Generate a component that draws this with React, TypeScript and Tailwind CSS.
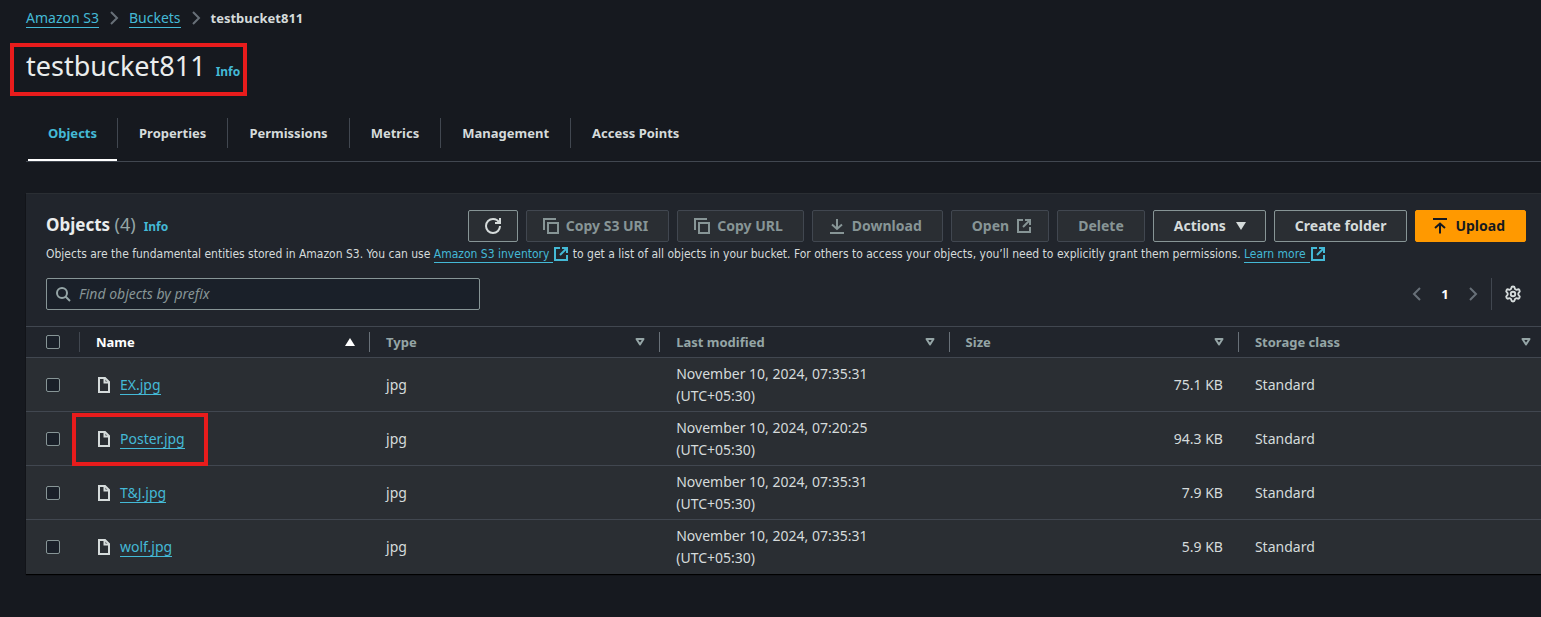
import React, { type ReactNode } from "react";
import { Settings } from "lucide-react";

type IconProps = { children: ReactNode; className?: string };

function Icon({ children, className = "" }: IconProps) {
  return (
    <svg
      viewBox="0 0 16 16"
      className={`size-4 shrink-0 fill-none stroke-current stroke-2 ${className}`}
      aria-hidden="true"
    >
      {children}
    </svg>
  );
}

const ChevronRight = () => (
  <Icon className="text-[#687078]">
    <path d="M5 2l6 6-6 6" />
  </Icon>
);
const ChevronLeft = () => (
  <Icon className="text-[#687078]">
    <path d="M11 2L5 8l6 6" />
  </Icon>
);
const CopyIcon = () => (
  <Icon>
    <path d="M15 5H5v10h10z" />
    <path d="M13 1H1v11" />
  </Icon>
);
const DownloadIcon = () => (
  <Icon>
    <path d="M1 15h14M8 1v10M3 6.5l5 4.5 5-4.5" />
  </Icon>
);
const UploadIcon = () => (
  <Icon>
    <path d="M1 1h14M8 15.5V5.5M3 10l5-4.5 5 4.5" />
  </Icon>
);
const ExternalIcon = () => (
  <Icon>
    <path d="M10 2h4v4" strokeLinecap="square" />
    <path d="M7 9l7-7" />
    <path d="M14 10v4H2V2h4" strokeLinecap="square" />
  </Icon>
);
const RefreshIcon = () => (
  <Icon>
    <path d="M10 5h5V0" />
    <path d="M15 8a7 7 0 1 1-7-7 6.9 6.9 0 0 1 6.3 4" />
  </Icon>
);
const SearchIcon = () => (
  <Icon>
    <circle cx="7" cy="7" r="5" />
    <path d="M15 15l-4.5-4.5" />
  </Icon>
);
const FileIcon = () => (
  <Icon>
    <path d="M9 1H3v14h10V5z" />
    <path d="M8.5 1v4.5H13" />
  </Icon>
);
const CaretDown = () => (
  <Icon>
    <path d="M3 4h10l-5 8z" className="fill-current stroke-none" />
  </Icon>
);
const CaretUp = () => (
  <Icon>
    <path d="M3 12h10L8 4z" className="fill-current stroke-none" />
  </Icon>
);
const SortIcon = () => (
  <Icon>
    <path d="M4.5 5h7L8 10.5z" strokeLinejoin="round" />
  </Icon>
);

function TextLink({ children }: { children: ReactNode }) {
  return (
    <a href="#" className="inline-block border-b border-[#44b9d6] leading-[18px] text-[#44b9d6]">
      {children}
    </a>
  );
}

function NoteLink({ children }: { children: ReactNode }) {
  return (
    <a href="#" className="inline-flex h-4 items-start align-top text-[#44b9d6]">
      <span className="border-b border-[#44b9d6] pr-1 leading-4">{children}</span>
      <ExternalIcon />
    </a>
  );
}

function InfoLink() {
  return (
    <a href="#" className="text-xs font-bold text-[#44b9d6]">
      Info
    </a>
  );
}

type ButtonProps = {
  children: ReactNode;
  label?: string;
  icon?: "start" | "end" | "only";
  disabled?: boolean;
  primary?: boolean;
};

function Button({ children, label, icon, disabled, primary }: ButtonProps) {
  const tone = primary
    ? "border-[#ff9900] bg-[#ff9900] text-[#16191f]"
    : disabled
      ? "border-[#414750] bg-[#2a2e33] text-[#879596]"
      : "border-[#879596] bg-[#2a2e33] text-[#d5dbdb]";
  const padding =
    icon === "only" ? "px-4" : icon === "start" ? "pl-4 pr-5" : icon === "end" ? "pl-5 pr-4" : "px-5";
  return (
    <button
      type="button"
      aria-label={label}
      disabled={disabled}
      className={`flex h-8 items-center gap-[7px] rounded-[2px] border text-sm font-bold whitespace-nowrap ${padding} ${tone}`}
    >
      {children}
    </button>
  );
}

function Checkbox({ label }: { label: string }) {
  return (
    <input
      type="checkbox"
      aria-label={label}
      className="block size-3.5 appearance-none rounded-[2px] border border-[#879596] bg-[#1a2029] checked:bg-[#44b9d6]"
    />
  );
}

const tabs = ["Objects", "Properties", "Permissions", "Metrics", "Management", "Access Points"];

const columns = [
  { name: "Name", sorted: true, width: "w-[19.15%]" },
  { name: "Type", sorted: false, width: "w-[19.15%]" },
  { name: "Last modified", sorted: false, width: "w-[19.1%]" },
  { name: "Size", sorted: false, width: "w-[19.1%]" },
  { name: "Storage class", sorted: false, width: "" },
];

const files = [
  { name: "EX.jpg", type: "jpg", modified: "November 10, 2024, 07:35:31", size: "75.1 KB", marked: false },
  { name: "Poster.jpg", type: "jpg", modified: "November 10, 2024, 07:20:25", size: "94.3 KB", marked: true },
  { name: "T&J.jpg", type: "jpg", modified: "November 10, 2024, 07:35:31", size: "7.9 KB", marked: false },
  { name: "wolf.jpg", type: "jpg", modified: "November 10, 2024, 07:35:31", size: "5.9 KB", marked: false },
];

function ObjectsTable() {
  return (
    <table className="w-full table-fixed border-separate border-spacing-0 text-left">
      <thead className="text-[13px]">
        <tr>
          <th className="w-[54px] border-y border-[#414750] p-0">
            <div className="flex h-[30px] items-center justify-between pl-5">
              <Checkbox label="Select all objects" />
              <span className="h-5 w-px bg-[#414750]" />
            </div>
          </th>
          {columns.map((c, i) => (
            <th
              key={c.name}
              className={`border-y border-[#414750] p-0 font-bold ${c.width} ${c.sorted ? "text-white" : "text-[#95a5a6]"}`}
            >
              <div className="flex h-[30px] items-center pl-4">
                <span className="grow">{c.name}</span>
                {c.sorted ? <CaretUp /> : <SortIcon />}
                {i < columns.length - 1 ? (
                  <span className="ml-[11px] h-5 w-px bg-[#687078]" />
                ) : (
                  <span className="w-[7px]" />
                )}
              </div>
            </th>
          ))}
        </tr>
      </thead>
      <tbody className="bg-[#2a2e33] text-sm leading-[22px] [&>tr:last-child>td]:border-transparent [&>tr>td]:border-b [&>tr>td]:border-[#414750]">
        {files.map((f) => (
          <tr key={f.name}>
            <td className="pl-5">
              <Checkbox label={`Select ${f.name}`} />
            </td>
            <td className="relative px-4">
              <div className="flex items-center gap-2">
                <FileIcon />
                <span className="flex pt-0.5">
                  <TextLink>{f.name}</TextLink>
                </span>
              </div>
              {f.marked && (
                <span className="pointer-events-none absolute top-px -left-2 h-[53px] w-[136px] border-4 border-[#e81c1c]" />
              )}
            </td>
            <td className="px-4">{f.type}</td>
            <td className="px-4 pt-[5px] pb-1">
              {f.modified}
              <br />
              (UTC+05:30)
            </td>
            <td className="px-4 text-right">{f.size}</td>
            <td className="px-4">Standard</td>
          </tr>
        ))}
      </tbody>
    </table>
  );
}

export default function App() {
  return (
    <main className="min-h-screen bg-[#16191f] pt-[7px] pb-10 pl-[26px] font-['Noto_Sans',sans-serif] text-sm text-[#d5dbdb]">
      <nav aria-label="Breadcrumb" className="flex h-[22px] items-center gap-[7px]">
        <TextLink>Amazon S3</TextLink>
        <ChevronRight />
        <TextLink>Buckets</TextLink>
        <ChevronRight />
        <span className="text-[13px] font-bold">testbucket811</span>
      </nav>

      <div className="mt-3.5 -ml-4 flex h-[53px] w-fit items-baseline gap-2.5 border-4 border-[#e81c1c] pr-[3px] pl-3">
        <h1 className="text-[27px] leading-[38px] text-[#eaeded]">testbucket811</h1>
        <InfoLink />
      </div>

      <div role="tablist" className="mt-[22px] flex border-b border-[#414750] pl-0.5">
        {tabs.map((t, i) => (
          <div key={t} className="flex">
            <button
              type="button"
              role="tab"
              aria-selected={i === 0}
              className={`h-[43px] border-b-2 pb-[11px] text-[13px] font-bold ${
                i === 0 ? "border-white px-5 text-[#44b9d6]" : "border-transparent px-[21px]"
              }`}
            >
              {t}
            </button>
            {i < tabs.length - 1 && <span className="h-[30px] w-px bg-[#414750]" />}
          </div>
        ))}
      </div>

      <section className="mt-[31px] border-t border-[#2a2e33] bg-[#21252c] shadow-[0_1px_1px_#000]">
        <div className="pt-4 pr-[15px] pb-4 pl-5">
          <div className="flex items-start justify-between gap-4">
            <div className="flex items-baseline gap-2">
              <h2 className="text-[17px] leading-7 font-bold text-[#eaeded]">
                Objects <span className="text-lg leading-7 font-normal text-[#95a5a6]">(4)</span>
              </h2>
              <InfoLink />
            </div>
            <div className="flex gap-2">
              <Button label="Refresh" icon="only">
                <RefreshIcon />
              </Button>
              <Button icon="start" disabled>
                <CopyIcon />
                Copy S3 URI
              </Button>
              <Button icon="start" disabled>
                <CopyIcon />
                Copy URL
              </Button>
              <Button icon="start" disabled>
                <DownloadIcon />
                Download
              </Button>
              <Button icon="end" disabled>
                Open
                <ExternalIcon />
              </Button>
              <Button disabled>Delete</Button>
              <Button icon="end">
                Actions
                <CaretDown />
              </Button>
              <Button>Create folder</Button>
              <Button icon="start" primary>
                <UploadIcon />
                Upload
              </Button>
            </div>
          </div>

          <p className="mt-1 font-['DejaVu_Sans_Condensed','Noto_Sans',sans-serif] text-xs leading-4">
            Objects are the fundamental entities stored in Amazon S3. You can use{" "}
            <NoteLink>Amazon S3 inventory</NoteLink> to get a list of all objects in your bucket. For others to access
            your objects, you’ll need to explicitly grant them permissions. <NoteLink>Learn more</NoteLink>
          </p>

          <div className="mt-4 flex h-8 items-center justify-between">
            <label className="flex h-8 w-[434px] items-center gap-2 rounded-[2px] border border-[#879596] bg-[#1a2029] px-2 text-[#95a5a6]">
              <SearchIcon />
              <input
                type="text"
                aria-label="Find objects by prefix"
                placeholder="Find objects by prefix"
                className="grow bg-transparent text-sm outline-none placeholder:text-[#879596] placeholder:italic"
              />
            </label>
            <div className="flex items-center">
              <button type="button" aria-label="Previous page">
                <ChevronLeft />
              </button>
              <button type="button" className="w-10 text-[13px] font-bold text-white">
                1
              </button>
              <button type="button" aria-label="Next page">
                <ChevronRight />
              </button>
              <span className="ml-2.5 h-8 w-px bg-[#414750]" />
              <button type="button" aria-label="Preferences" className="pr-1 pl-3">
                <Settings className="size-[18px]" strokeWidth={2.5} />
              </button>
            </div>
          </div>
        </div>
        <ObjectsTable />
      </section>
    </main>
  );
}
